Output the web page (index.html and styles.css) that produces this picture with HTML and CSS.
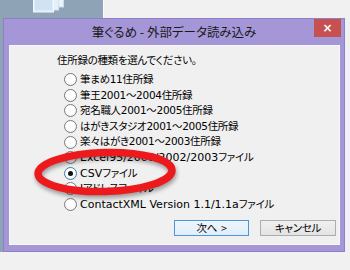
FILE: index.html
```html
<!DOCTYPE html>
<html lang="ja">
<head>
<meta charset="utf-8">
<link rel="stylesheet" href="styles.css">
</head>
<body>
<div class="screen">
  <div class="desk">
    <svg class="desk-icon" width="32" height="14" viewBox="0 0 32 14">
      <rect x="9.5" y="-4" width="21" height="11" fill="#e9f3fb" stroke="#cfdde9"/>
      <rect x="5.5" y="-2" width="20" height="12" fill="#e4f0fa" stroke="#d3e0ec"/>
      <rect x="0.5" y="-1" width="20" height="13" fill="#dcecf9" stroke="#f4f9fd"/>
      <rect x="2" y="0" width="17" height="10" fill="#cfe3f5"/>
    </svg>
  </div>
  <div class="dialog">
    <div class="titlebar">
      <span></span>
      <span class="title">筆ぐるめ - 外部データ読み込み</span>
      <span class="close">×</span>
    </div>
    <div class="content">
      <p class="label">住所録の種類を選んでください。</p>
      <ul class="options">
        <li class="opt"><span class="radio"></span><span>筆まめ11住所録</span></li>
        <li class="opt"><span class="radio"></span><span>筆王2001～2004住所録</span></li>
        <li class="opt"><span class="radio"></span><span>宛名職人2001～2005住所録</span></li>
        <li class="opt"><span class="radio"></span><span>はがきスタジオ2001～2005住所録</span></li>
        <li class="opt"><span class="radio"></span><span>楽々はがき2001～2003住所録</span></li>
        <li class="opt"><span class="radio"></span><span><span class="en">Excel95/2000/2002/2003</span>ファイル</span></li>
        <li class="opt"><span class="radio checked"></span><span><span class="en">CSV</span>ファイル</span></li>
        <li class="opt"><span class="radio"></span><span>Jアドレスファイル</span></li>
        <li class="opt"><span class="radio"></span><span><span class="en">ContactXML Version 1.1/1.1a</span>ファイル</span></li>
      </ul>
      <div class="buttons">
        <span class="btn default">次へ &nbsp;&gt;</span>
        <span class="btn">キャンセル</span>
      </div>
    </div>
  </div>
  <svg class="mark" width="160" height="64" viewBox="0 0 160 64">
    <ellipse cx="77" cy="29" rx="67" ry="19.5" fill="none" stroke="#ec1a1c" stroke-width="7.5" transform="rotate(-1.5 77 29)"/>
  </svg>
</div>
</body>
</html>
```

FILE: styles.css
```css
* { box-sizing: border-box; }
html, body { margin: 0; padding: 0; }
body {
  width: 350px;
  height: 270px;
  overflow: hidden;
  font-family: "Noto Sans CJK JP", "Noto Sans", sans-serif;
  font-feature-settings: "palt";
}
.screen {
  position: relative;
  width: 350px;
  height: 270px;
  background:
    linear-gradient(#8ea3b5, #8ea3b5) 0 0 / 103px 252px no-repeat,
    linear-gradient(#fbfbfb, #fbfbfb) 103px 0 / 1px 18px no-repeat,
    #f1f1f1;
}
.desk {
  height: 18px;
  padding-left: 33px;
}
.desk-icon { display: block; }
.dialog {
  margin-left: 3px;
  width: 342px;
  height: 234px;
  background: #a596d8;
  border: 1px solid #8c80c6;
  display: flex;
  flex-direction: column;
}
.titlebar {
  height: 26px;
  display: grid;
  grid-template-columns: 1fr auto 1fr;
  align-items: start;
}
.title {
  font-size: 12.5px;
  line-height: 26px;
  color: #1a1a1a;
  white-space: nowrap;
}
.close {
  justify-self: end;
  margin-right: 3px;
  width: 27px;
  height: 18px;
  background: #c75050;
  color: #fff;
  font-family: "DejaVu Sans", sans-serif;
  font-weight: bold;
  font-size: 12px;
  line-height: 18px;
  text-align: center;
}
.content {
  flex: 1;
  margin: 0 4px 6px 5px;
  background: #f0f0f0;
  border: 1px solid #f8f8f8;
  padding: 6px 3px 0 47px;
  color: #000;
  font-family: "DejaVu Sans", "Noto Sans CJK JP", sans-serif;
  font-size: 10.5px;
  letter-spacing: -0.3px;
}
.label {
  margin: 0 0 4px;
  line-height: 16px;
  white-space: nowrap;
}
.options {
  list-style: none;
  margin: 0 0 0 7px;
  padding: 0;
}
.opt {
  height: 15.6px;
  display: flex;
  align-items: center;
  gap: 3px;
  white-space: nowrap;
  line-height: 15.6px;
}
.en {
  font-size: 11px;
  letter-spacing: 0;
}
.radio {
  width: 13px;
  height: 13px;
  flex: none;
  border-radius: 50%;
  border: 1px solid #7a7a7a;
  background: radial-gradient(circle at 50% 40%, #ffffff 40%, #ececec 100%);
  display: flex;
  align-items: center;
  justify-content: center;
}
.radio.checked { border-color: #3d7bb5; }
.radio.checked::after {
  content: "";
  width: 5px;
  height: 5px;
  border-radius: 50%;
  background: #111;
}
.buttons {
  display: flex;
  justify-content: flex-end;
  gap: 11px;
  margin-top: 8px;
}
.btn {
  width: 76px;
  height: 16px;
  border: 1px solid #adadad;
  background: linear-gradient(#f0f0f0, #e3e3e3);
  font-family: "Noto Sans CJK JP", sans-serif;
  font-size: 10.5px;
  line-height: 14px;
  text-align: center;
  color: #000;
}
.btn.default {
  width: 75px;
  border-color: #4a96dc;
  background: linear-gradient(#eef5fc, #e1eefb);
}
.mark {
  position: absolute;
  left: 28px;
  top: 143px;
  filter: drop-shadow(1px 3px 2px rgba(0, 0, 0, 0.35));
}
```
